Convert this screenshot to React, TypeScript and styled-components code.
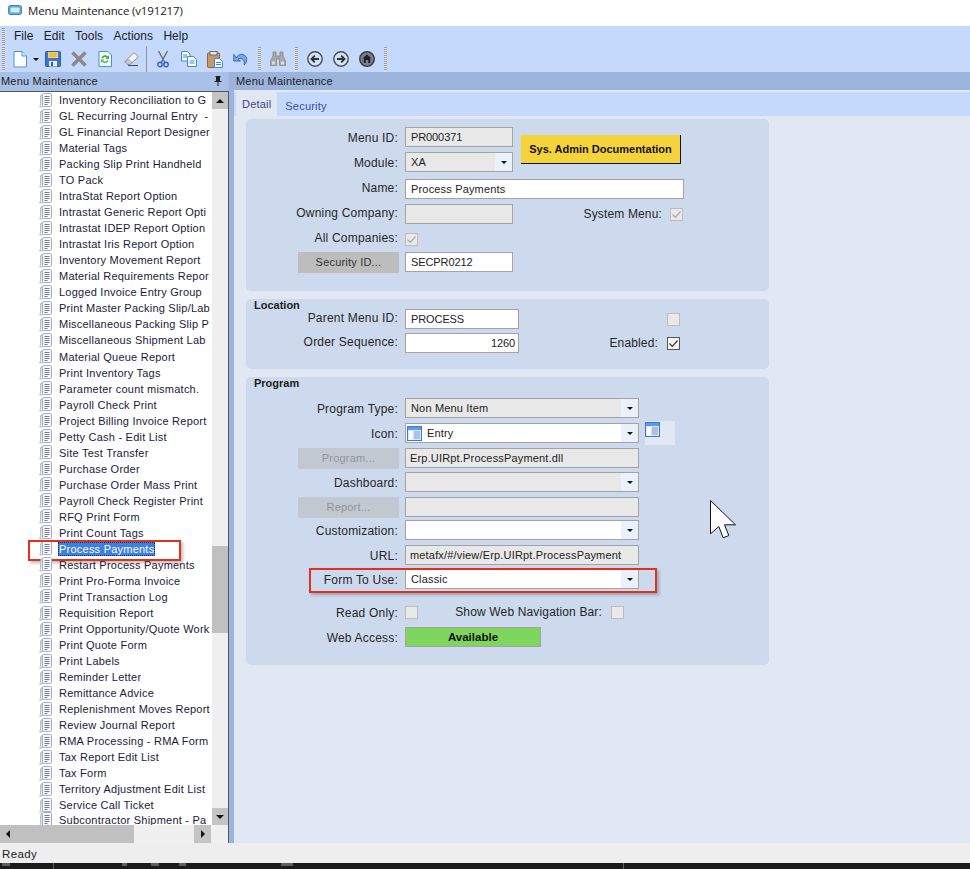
import React from 'react';
import styled, { createGlobalStyle } from 'styled-components';

const GlobalStyle = createGlobalStyle`
    html, body {
        margin: 0;
        padding: 0;
        background: #fff;
    }
    body {
        font-family: "Liberation Sans", Arial, sans-serif;
        font-size: 11px;
        color: #1e1e1e;
    }
    * {
        box-sizing: border-box;
    }
`;

const menuItems: string[] = [
    'Inventory Reconciliation to G',
    'GL Recurring Journal Entry  -',
    'GL Financial Report Designer',
    'Material Tags',
    'Packing Slip Print Handheld',
    'TO Pack',
    'IntraStat Report Option',
    'Intrastat Generic Report Opti',
    'Intrastat IDEP Report Option',
    'Intrastat Iris Report Option',
    'Inventory Movement Report',
    'Material Requirements Repor',
    'Logged Invoice Entry Group',
    'Print Master Packing Slip/Lab',
    'Miscellaneous Packing Slip P',
    'Miscellaneous Shipment Lab',
    'Material Queue Report',
    'Print Inventory Tags',
    'Parameter count mismatch.',
    'Payroll Check Print',
    'Project Billing Invoice Report',
    'Petty Cash - Edit List',
    'Site Test Transfer',
    'Purchase Order',
    'Purchase Order Mass Print',
    'Payroll Check Register Print',
    'RFQ Print Form',
    'Print Count Tags',
    'Process Payments',
    'Restart Process Payments',
    'Print Pro-Forma Invoice',
    'Print Transaction Log',
    'Requisition Report',
    'Print Opportunity/Quote Work',
    'Print Quote Form',
    'Print Labels',
    'Reminder Letter',
    'Remittance Advice',
    'Replenishment Moves Report',
    'Review Journal Report',
    'RMA Processing - RMA Form',
    'Tax Report Edit List',
    'Tax Form',
    'Territory Adjustment Edit List',
    'Service Call Ticket',
    'Subcontractor Shipment - Pa',
];

/* ---------- icons ---------- */

const AppIcon = () => (
    <svg width="14" height="10" viewBox="0 0 14 10">
        <rect x="0.5" y="0.5" width="13" height="9" rx="2" fill="#5fa8d8" stroke="#3f88c0" />
        <rect x="2.5" y="2.5" width="9" height="5" rx="1" fill="#d4ecfa" />
    </svg>
);

const NewDocIcon = () => (
    <svg width="14" height="17" viewBox="0 0 14 17">
        <path d="M1 .5h8l4.5 4.5v11H1z" fill="#fff" stroke="#4a90e0" />
        <path d="M9 .5v4.5h4.5" fill="#d8e8fb" stroke="#4a90e0" />
    </svg>
);

const SaveIcon = () => (
    <svg width="16" height="16" viewBox="0 0 16 16">
        <rect x="0.5" y="0.5" width="15" height="15" rx="1" fill="#3f76c8" stroke="#2f5ca8" />
        <rect x="3" y="1" width="10" height="6" fill="#f5d36a" />
        <path d="M4.5 3h7M4.5 5h7" stroke="#d9a93c" />
        <rect x="4" y="10" width="8" height="5.5" fill="#e8eefa" />
        <rect x="6" y="11" width="2" height="4" fill="#2f5ca8" />
    </svg>
);

const DeleteIcon = () => (
    <svg width="16" height="16" viewBox="0 0 16 16">
        <path d="M1.5 1.5l13 13M14.5 1.5l-13 13" stroke="#8a8a8a" strokeWidth="3.6" />
    </svg>
);

const RefreshIcon = () => (
    <svg width="14" height="16" viewBox="0 0 14 16">
        <path d="M1 .5h9l3.5 3.5v11.5H1z" fill="#f4f8ff" stroke="#4a90e0" />
        <path d="M3.5 7a3.6 3.6 0 0 1 6.4-1.4L11 4.5V8H7.6l1.2-1.2A2.2 2.2 0 0 0 5 7.6z" fill="#46a838" />
        <path d="M10.5 9.4A3.6 3.6 0 0 1 4.1 10.8L3 12V8.6h3.4L5.2 9.8A2.2 2.2 0 0 0 9 9z" fill="#6cc04a" />
    </svg>
);

const EraserIcon = () => (
    <svg width="15" height="14" viewBox="0 0 15 14">
        <path d="M1 9.5L9 1.5c.6-.6 1.4-.6 2 0l2.6 2.2c.6.6.6 1.3 0 1.9L6 12.5H3.5z" fill="#f2f2f4" stroke="#8c8c98" />
        <path d="M1 9.5l2.5 3H6l2-2-3-3z" fill="#c8c8d0" stroke="#8c8c98" strokeWidth=".6" />
        <path d="M4 13.5h10" stroke="#3c4a6a" />
    </svg>
);

const CutIcon = () => (
    <svg width="12" height="17" viewBox="0 0 12 17">
        <path d="M1.5 0l6 11M10.5 0l-6 11" stroke="#6a6d73" strokeWidth="1.4" />
        <circle cx="3" cy="13.5" r="2.2" fill="none" stroke="#2e62c8" strokeWidth="1.4" />
        <circle cx="9" cy="13.5" r="2.2" fill="none" stroke="#2e62c8" strokeWidth="1.4" />
    </svg>
);

const CopyIcon = () => (
    <svg width="16" height="16" viewBox="0 0 16 16">
        <path d="M.5.5h6l2.5 2.5v7H.5z" fill="#fff" stroke="#3f86e0" />
        <path d="M6.5 5.5h6l3 3v7h-9z" fill="#fff" stroke="#3f86e0" />
        <path d="M2 4h4M2 6h4M8.5 10h5M8.5 12h5" stroke="#3f86e0" />
    </svg>
);

const PasteIcon = () => (
    <svg width="16" height="17" viewBox="0 0 16 17">
        <rect x="0.5" y="2" width="12" height="14.5" rx="1" fill="#c49a6c" stroke="#8a6440" />
        <rect x="3" y="0.5" width="7" height="3.5" fill="#e8e8e8" stroke="#6c6c6c" />
        <path d="M7.5 7.5h5l3 3v6h-8z" fill="#fff" stroke="#3f86e0" />
        <path d="M9 11.5h5M9 13.5h5" stroke="#3f86e0" />
    </svg>
);

const UndoIcon = () => (
    <svg width="15" height="14" viewBox="0 0 15 14">
        <path d="M3.5 6A5 4.4 0 0 1 13.6 8c0 2-1 3.5-2.6 5 .6-2.6.2-6-3-6.6-1.4-.2-2.4.2-3 .9L7.5 9H.8V2.4L3 5z" fill="#7fa8e8" stroke="#2e58c0" strokeWidth=".9" />
    </svg>
);

const BinocularsIcon = () => (
    <svg width="16" height="16" viewBox="0 0 16 16">
        <path d="M3 1h3v4h4V1h3v4l2.5 5v4.5H9.5V8h-3v6.5H.5V10L3 5z" fill="#a9a9a9" stroke="#868686" strokeWidth=".8" />
        <path d="M2 10.5h3v3H2zM11 10.5h3v3h-3z" fill="#dedede" />
    </svg>
);

const ArrowCircleIcon = ({ dir }: { dir: 'left' | 'right' }) => (
    <svg width="16" height="16" viewBox="0 0 16 16">
        <circle cx="8" cy="8" r="7.2" fill="#d6e1f5" stroke="#4a4d54" strokeWidth="1.4" />
        {dir === 'left'
            ? <path d="M12 8H5M7.8 4.7L4.5 8l3.3 3.3" fill="none" stroke="#2c2f36" strokeWidth="1.8" />
            : <path d="M4 8h7M8.2 4.7L11.5 8l-3.3 3.3" fill="none" stroke="#2c2f36" strokeWidth="1.8" />}
    </svg>
);

const HomeCircleIcon = () => (
    <svg width="16" height="16" viewBox="0 0 16 16">
        <circle cx="8" cy="8" r="7.2" fill="#7c818b" stroke="#3e4148" strokeWidth="1.6" />
        <path d="M8 3.2l4.5 4.3h-1.3V12H9.2V9H6.800v3H4.800V7.500H3.500z" fill="#1f2126" />
    </svg>
);

const PinIcon = () => (
    <svg width="8" height="10" viewBox="0 0 8 10">
        <path d="M1.5.5h5M2.5.5v5M5.5.5v5M.5 5.500h7M4 5.500V10" fill="none" stroke="#1e1e1e" />
        <rect x="3" y="1" width="2.5" height="4" fill="#1e1e1e" />
    </svg>
);

const TreeDocIcon = () => (
    <svg width="14" height="15" viewBox="0 0 14 15">
        <path d="M3 1.5C1.5 2 1.5 3 1.5 5v6c0 1.5-.5 2.500-1 3h3z" fill="#e8edf4" stroke="#a8b2c0" strokeWidth=".8" />
        <rect x="3.5" y="0.5" width="9" height="13" rx="1" fill="#f4f6fa" stroke="#a4aebc" />
        <path d="M5.5 3.5h5M5.5 5.5h5M5.5 7.5h5M5.5 9.5h5M5.5 11.5h3" stroke="#75818f" />
    </svg>
);

const EntryIcon = () => (
    <svg width="15" height="15" viewBox="0 0 15 15">
        <rect x="0.5" y="0.5" width="14" height="14" fill="#dbe7f8" stroke="#3f78d0" />
        <rect x="1" y="1" width="13" height="3" fill="#5f9ae8" />
        <rect x="2" y="5" width="3.5" height="8.5" fill="#fff" />
        <path d="M7 6h6M7 8h6M7 10h6M7 12h6" stroke="#7f9cc8" />
    </svg>
);

const CheckMark = ({ color }: { color: string }) => (
    <svg width="11" height="11" viewBox="0 0 11 11">
        <path d="M1.5 5.5l2.8 2.8L9.5 2.5" fill="none" stroke={color} strokeWidth="1.2" />
    </svg>
);

/* ---------- window chrome ---------- */

const Window = styled.div`
    position: relative;
    display: flex;
    flex-direction: column;
    width: 970px;
    height: 869px;
    overflow: hidden;
`;

const TitleBar = styled.div`
    display: flex;
    align-items: center;
    gap: 6px;
    height: 26px;
    padding: 0 0 6px 8px;
    font-family: "Open Sans", sans-serif;
    font-size: 11.5px;
    letter-spacing: -.15px;
    color: #222;
    background: #fff;
`;

const MenuBar = styled.div`
    display: flex;
    align-items: center;
    height: 20px;
    padding-left: 2px;
    background: #c5d9fd;
    font-size: 12px;
    color: #1c1c1c;

    span {
        margin-right: 10.5px;
    }
`;

const Grip = styled.i<{ $gap?: number }>`
    display: block;
    flex: none;
    width: 3px;
    height: 24px;
    margin: 0 ${p => p.$gap ?? 0}px;
    background: repeating-linear-gradient(to bottom, #9a9a9a 0 1px, #e4e4e4 1px 2px);
`;

const MenuGrip = styled(Grip)`
    height: 17px;
    margin-right: 9px;
`;

const ToolBar = styled.div`
    display: flex;
    align-items: center;
    height: 26px;
    padding-left: 2px;
    background: #c5d9fd;
`;

const ToolButton = styled.span`
    display: flex;
    flex: none;
    align-items: center;
    justify-content: center;
    width: 26px;
    height: 26px;
`;

const FirstToolButton = styled(ToolButton)`
    margin-left: 1.5px;
`;

const Caret = styled.i`
    flex: none;
    width: 0;
    height: 0;
    border-left: 3px solid transparent;
    border-right: 3px solid transparent;
    border-top: 3px solid #111;
`;

const ToolCaret = styled(Caret)`
    margin-right: 1.5px;
`;

const ToolSeparator = styled.i`
    flex: none;
    width: 1px;
    height: 26px;
    margin: 0 2.5px 0 2px;
    background: #8d949e;
`;

const Main = styled.div`
    display: flex;
    flex: 1;
    min-height: 0;
`;

const StatusBar = styled.div`
    flex: none;
    height: 20px;
    padding: 5px 2px;
    background: #eeeeee;
    font-size: 11.5px;
    color: #222;
    letter-spacing: .4px;
`;

const TaskStrip = styled.div`
    display: flex;
    flex: none;
    height: 6px;
    background: #1b1b1b;
    overflow: hidden;
`;

const TaskMark = styled.i<{ $left: number; $width: number; $short?: boolean }>`
    display: block;
    flex: none;
    width: ${p => p.$width}px;
    height: ${p => (p.$short ? 3 : 6)}px;
    margin-left: ${p => p.$left}px;
    background: #5e5e5e;
`;

/* ---------- left tree ---------- */

const Side = styled.div`
    display: flex;
    flex: none;
    flex-direction: column;
    width: 229px;
`;

const SideHeader = styled.div`
    display: flex;
    flex: none;
    align-items: center;
    justify-content: space-between;
    height: 19px;
    padding: 0 7px 2px 1px;
    background: #a9c0e8;
    color: #1c1c1c;
    letter-spacing: .2px;
`;

const TreeFrame = styled.div`
    display: flex;
    flex: 1;
    flex-direction: column;
    min-height: 0;
    border-top: 1px solid #55575c;
    border-right: 1px solid #55575c;
    background: #fff;
`;

const TreeBody = styled.div`
    display: flex;
    flex: 1;
    min-height: 0;
`;

const TreeList = styled.ul`
    flex: 1;
    min-width: 0;
    margin: 0;
    padding: 0;
    list-style: none;
    overflow: hidden;
`;

const TreeRow = styled.li`
    position: relative;
    display: flex;
    align-items: center;
    height: 16.04px;
    padding-left: 39px;
    white-space: pre;
    color: #1a1a3a;
    letter-spacing: .23px;

    svg {
        flex: none;
        margin-right: 5px;
    }

    &:last-child {
        margin-top: -1.5px;
    }
`;

const RowLabel = styled.span<{ $selected?: boolean }>`
    padding: 0 1px;
    line-height: 14px;
    ${p => p.$selected && `
        color: #fff;
        background: #3d80df;
        outline: 1px dotted #10305c;
        outline-offset: -1px;
    `}
`;

const RedMark = styled.i`
    position: absolute;
    border: 2px solid #e1301f;
    box-shadow: 2px 2px 3px rgba(60, 60, 60, .35);
    pointer-events: none;
`;

const RowMark = styled(RedMark)`
    left: 28px;
    top: -1px;
    width: 153px;
    height: 21px;
`;

const VScroll = styled.div`
    display: flex;
    flex: none;
    flex-direction: column;
    width: 16px;
    background: #f0f0f0;
`;

const HScroll = styled.div`
    display: flex;
    flex: none;
    height: 18px;
    background: #f0f0f0;
`;

const ScrollButton = styled.div`
    display: flex;
    flex: none;
    align-items: center;
    justify-content: center;
    width: 16px;
    height: 17px;
    background: #c4c4c4;
`;

const VTrackGap = styled.div<{ $size?: number }>`
    flex: ${p => (p.$size ? 'none' : 1)};
    height: ${p => p.$size ?? 0}px;
`;

const VThumb = styled.div`
    flex: none;
    height: 87px;
    background: #c0c0c0;
`;

const HThumb = styled.div`
    display: flex;
    flex: none;
    align-items: center;
    width: 134px;
    padding-left: 6px;
    background: #c0c0c0;
`;

const HGap = styled.div`
    flex: none;
    width: 60px;
`;

const HButton = styled(ScrollButton)`
    width: 17px;
    height: 18px;
`;

const Triangle = styled.i<{ $dir: 'up' | 'down' | 'left' | 'right' }>`
    width: 0;
    height: 0;
    ${p => p.$dir === 'up' && 'border-left: 4px solid transparent; border-right: 4px solid transparent; border-bottom: 4px solid #111;'}
    ${p => p.$dir === 'down' && 'border-left: 4px solid transparent; border-right: 4px solid transparent; border-top: 4px solid #111;'}
    ${p => p.$dir === 'left' && 'border-top: 4px solid transparent; border-bottom: 4px solid transparent; border-right: 4px solid #111;'}
    ${p => p.$dir === 'right' && 'border-top: 4px solid transparent; border-bottom: 4px solid transparent; border-left: 4px solid #111;'}
`;

/* ---------- right pane ---------- */

const Pane = styled.div`
    display: flex;
    flex: 1;
    flex-direction: column;
    min-width: 0;
`;

const PaneHeader = styled.div`
    display: flex;
    flex: none;
    align-items: center;
    height: 18px;
    padding-left: 7px;
    background: #9cb3dc;
    color: #1c1c1c;
    letter-spacing: .2px;
`;

const PaneBody = styled.div`
    flex: 1;
    min-height: 0;
    margin-left: 5px;
    padding-top: 2px;
    background: #e1e8f4;
    box-shadow: -5px 0 0 #9cb3dc;
`;

const TabStrip = styled.div`
    display: flex;
    align-items: flex-end;
    height: 24px;
    padding-left: 2px;
    background: #c5d9fd;
`;

const Tab = styled.div<{ $active?: boolean }>`
    height: ${p => (p.$active ? 24 : 20)}px;
    padding: ${p => (p.$active ? '6px 6px 0' : '4px 8px 0')};
    border-radius: 3px 3px 0 0;
    background: ${p => (p.$active ? '#e1e8f4' : 'transparent')};
    color: ${p => (p.$active ? '#38488c' : '#3a50a0')};
    letter-spacing: .2px;
`;

const TabContent = styled.div`
    display: flex;
    flex-direction: column;
    gap: 8px;
    margin-top: 3px;
    padding-left: 12px;
`;

const Panel = styled.section<{ $height: number; $top: number }>`
    position: relative;
    width: 523px;
    height: ${p => p.$height}px;
    padding-top: ${p => p.$top}px;
    border-radius: 5px;
    background: #cddaee;
`;

const PanelTitle = styled.div`
    height: 10px;
    margin: -4px 0 0 8px;
    font-weight: bold;
    line-height: 10px;
    color: #1c1c1c;
`;

const Stack = styled.div<{ $gap?: number; $mt?: number }>`
    display: flex;
    flex-direction: column;
    gap: ${p => p.$gap ?? 5}px;
    margin-top: ${p => p.$mt ?? 0}px;
`;

const Row = styled.div<{ $mt?: number }>`
    position: relative;
    display: flex;
    align-items: center;
    height: 20px;
    margin-top: ${p => p.$mt ?? 0}px;
`;

const TopRows = styled.div`
    display: flex;
    align-items: center;
`;

const Label = styled.div`
    flex: none;
    width: 153px;
    padding: 2px 1px 0 0;
    margin-right: 6px;
    font-size: 12px;
    letter-spacing: .2px;
    text-align: right;
    white-space: nowrap;
    color: #262626;
`;

const RaisedLabel = styled(Label)`
    padding-top: 0;
    margin-top: -2px;
`;

const ActionCell = styled.div`
    display: flex;
    flex: none;
    justify-content: flex-end;
    width: 153px;
    margin-right: 6px;
`;

const SideLabel = styled.div<{ $width: number }>`
    flex: none;
    width: ${p => p.$width}px;
    font-size: 12px;
    letter-spacing: .15px;
    text-align: right;
    white-space: nowrap;
    color: #262626;
`;

const GreyButton = styled.div<{ $muted?: boolean }>`
    display: flex;
    align-items: center;
    justify-content: center;
    width: 101px;
    height: 21px;
    background: ${p => (p.$muted ? '#c2c8d2' : '#bdbdbd')};
    color: ${p => (p.$muted ? '#8e939b' : '#333')};
    letter-spacing: .2px;
`;

const Field = styled.div<{ $width: number; $disabled?: boolean; $right?: boolean; $pad?: number; $tight?: boolean }>`
    display: flex;
    flex: none;
    align-items: center;
    justify-content: ${p => (p.$right ? 'flex-end' : 'flex-start')};
    width: ${p => p.$width}px;
    height: 20px;
    padding: 0 ${p => p.$pad ?? 5}px;
    border: 1px solid #a3a3a3;
    background: ${p => (p.$disabled ? '#e8e8e8' : '#fff')};
    color: #222;
    letter-spacing: ${p => (p.$tight ? -.1 : .17)}px;
    white-space: nowrap;
    overflow: hidden;
`;

const SelectBox = styled(Field)`
    padding: 0 0 0 5px;

    svg {
        margin: 0 5px 0 -4px;
    }
`;

const SelectText = styled.span`
    flex: 1;
`;

const SelectArrow = styled.span`
    display: flex;
    flex: none;
    align-items: center;
    justify-content: center;
    width: 17px;
    height: 100%;
    background: #eaf1fb;
`;

const Check = styled.span<{ $state: 'on' | 'off' | 'lockedOn'; $ml?: number }>`
    display: flex;
    flex: none;
    align-items: center;
    justify-content: center;
    width: 13px;
    height: 13px;
    margin-left: ${p => p.$ml ?? 0}px;
    border: 1px solid ${p => (p.$state === 'on' ? '#555' : '#bcbcbc')};
    background: ${p => (p.$state === 'on' ? '#f6f6f6' : '#e9e9e9')};
`;

const DocButton = styled.button`
    flex: none;
    width: 160px;
    height: 29px;
    margin-left: 8px;
    padding: 0;
    border: 0;
    border-right: 1px solid #111;
    border-bottom: 1px solid #111;
    background: #f5d33a;
    font: bold 11px "Liberation Sans", Arial, sans-serif;
    color: #111;
`;

const IconSwatch = styled.span`
    display: flex;
    flex: none;
    align-items: flex-start;
    width: 30px;
    height: 24px;
    margin-left: 6px;
    padding-top: 1px;
    background: #e1e8f4;
`;

const FormMark = styled(RedMark)`
    left: 63px;
    top: -1px;
    width: 348px;
    height: 25px;
`;

const Available = styled.div`
    display: flex;
    align-items: center;
    justify-content: center;
    flex: none;
    width: 136px;
    height: 20px;
    border: 1px solid #a3a3a3;
    background: #7fd65f;
    font-weight: bold;
    font-size: 11.5px;
    color: #111;
`;

const Cursor = styled.svg`
    position: absolute;
    left: 710px;
    top: 500px;
`;

const Select = ({ width, disabled, text, icon }: { width: number; disabled?: boolean; text?: string; icon?: React.ReactNode }) => (
    <SelectBox $width={width} $disabled={disabled}>
        {icon}
        <SelectText>{text}</SelectText>
        <SelectArrow><Caret /></SelectArrow>
    </SelectBox>
);

const App = () => {
    return (
        <Window>
            <GlobalStyle />
            <TitleBar>
                <AppIcon />
                <span>Menu Maintenance (v191217)</span>
            </TitleBar>
            <MenuBar>
                <MenuGrip />
                <span>File</span>
                <span>Edit</span>
                <span>Tools</span>
                <span>Actions</span>
                <span>Help</span>
            </MenuBar>
            <ToolBar>
                <Grip />
                <FirstToolButton><NewDocIcon /></FirstToolButton>
                <ToolCaret />
                <ToolButton><SaveIcon /></ToolButton>
                <ToolButton><DeleteIcon /></ToolButton>
                <ToolButton><RefreshIcon /></ToolButton>
                <ToolButton><EraserIcon /></ToolButton>
                <ToolSeparator />
                <ToolButton><CutIcon /></ToolButton>
                <ToolButton><CopyIcon /></ToolButton>
                <ToolButton><PasteIcon /></ToolButton>
                <ToolButton><UndoIcon /></ToolButton>
                <Grip $gap={4} />
                <ToolButton><BinocularsIcon /></ToolButton>
                <Grip $gap={4} />
                <ToolButton><ArrowCircleIcon dir="left" /></ToolButton>
                <ToolButton><ArrowCircleIcon dir="right" /></ToolButton>
                <ToolButton><HomeCircleIcon /></ToolButton>
                <Grip $gap={4} />
            </ToolBar>
            <Main>
                <Side>
                    <SideHeader>
                        <span>Menu Maintenance</span>
                        <PinIcon />
                    </SideHeader>
                    <TreeFrame>
                        <TreeBody>
                            <TreeList>
                                {menuItems.map(item => (
                                    <TreeRow key={item}>
                                        <TreeDocIcon />
                                        <RowLabel $selected={item === 'Process Payments'}>{item}</RowLabel>
                                        {item === 'Process Payments' && <RowMark />}
                                    </TreeRow>
                                ))}
                            </TreeList>
                            <VScroll>
                                <ScrollButton><Triangle $dir="up" /></ScrollButton>
                                <VTrackGap $size={437} />
                                <VThumb />
                                <VTrackGap />
                                <ScrollButton><Triangle $dir="down" /></ScrollButton>
                            </VScroll>
                        </TreeBody>
                        <HScroll>
                            <HThumb><Triangle $dir="left" /></HThumb>
                            <HGap />
                            <HButton><Triangle $dir="right" /></HButton>
                        </HScroll>
                    </TreeFrame>
                </Side>
                <Pane>
                    <PaneHeader>Menu Maintenance</PaneHeader>
                    <PaneBody>
                        <TabStrip>
                            <Tab $active>Detail</Tab>
                            <Tab>Security</Tab>
                        </TabStrip>
                        <TabContent>
                            <Panel $height={172} $top={8}>
                                <Stack>
                                    <TopRows>
                                        <Stack>
                                            <Row>
                                                <Label>Menu ID:</Label>
                                                <Field $width={108} $disabled $tight>PR000371</Field>
                                            </Row>
                                            <Row>
                                                <Label>Module:</Label>
                                                <Select width={108} disabled text="XA" />
                                            </Row>
                                        </Stack>
                                        <DocButton>Sys. Admin Documentation</DocButton>
                                    </TopRows>
                                    <Row $mt={2}>
                                        <RaisedLabel>Name:</RaisedLabel>
                                        <Field $width={279}>Process Payments</Field>
                                    </Row>
                                    <Row>
                                        <RaisedLabel>Owning Company:</RaisedLabel>
                                        <Field $width={108} $disabled />
                                        <SideLabel $width={149}>System Menu:</SideLabel>
                                        <Check $state="lockedOn" $ml={8}><CheckMark color="#a8a8a8" /></Check>
                                    </Row>
                                    <Row>
                                        <RaisedLabel>All Companies:</RaisedLabel>
                                        <Check $state="lockedOn"><CheckMark color="#a8a8a8" /></Check>
                                    </Row>
                                    <Row $mt={-2}>
                                        <ActionCell><GreyButton>Security ID...</GreyButton></ActionCell>
                                        <Field $width={108} $tight>SECPR0212</Field>
                                    </Row>
                                </Stack>
                            </Panel>
                            <Panel $height={70} $top={5}>
                                <PanelTitle>Location</PanelTitle>
                                <Stack $gap={4} $mt={-1}>
                                    <Row>
                                        <RaisedLabel>Parent Menu ID:</RaisedLabel>
                                        <Field $width={114} $tight>PROCESS</Field>
                                        <Check $state="off" $ml={148} />
                                    </Row>
                                    <Row>
                                        <RaisedLabel>Order Sequence:</RaisedLabel>
                                        <Field $width={114} $right $pad={3} $tight>1260</Field>
                                        <SideLabel $width={139}>Enabled:</SideLabel>
                                        <Check $state="on" $ml={9}><CheckMark color="#333" /></Check>
                                    </Row>
                                </Stack>
                            </Panel>
                            <Panel $height={288} $top={5}>
                                <PanelTitle>Program</PanelTitle>
                                <Stack $mt={10}>
                                    <Row>
                                        <Label>Program Type:</Label>
                                        <Select width={234} disabled text="Non Menu Item" />
                                    </Row>
                                    <Row>
                                        <Label>Icon:</Label>
                                        <Select width={234} text="Entry" icon={<EntryIcon />} />
                                        <IconSwatch><EntryIcon /></IconSwatch>
                                    </Row>
                                    <Row>
                                        <ActionCell><GreyButton $muted>Program...</GreyButton></ActionCell>
                                        <Field $width={234} $disabled $pad={4}>Erp.UIRpt.ProcessPayment.dll</Field>
                                    </Row>
                                    <Row $mt={-1}>
                                        <Label>Dashboard:</Label>
                                        <Select width={234} disabled />
                                    </Row>
                                    <Row>
                                        <ActionCell><GreyButton $muted>Report...</GreyButton></ActionCell>
                                        <Field $width={234} $disabled />
                                    </Row>
                                    <Row $mt={-2}>
                                        <Label>Customization:</Label>
                                        <Select width={234} />
                                    </Row>
                                    <Row>
                                        <Label>URL:</Label>
                                        <Field $width={234} $disabled $pad={4}>metafx/#/view/Erp.UIRpt.ProcessPayment</Field>
                                    </Row>
                                    <Row $mt={-1}>
                                        <Label>Form To Use:</Label>
                                        <Select width={234} text="Classic" />
                                        <FormMark />
                                    </Row>
                                    <Row $mt={8}>
                                        <Label>Read Only:</Label>
                                        <Check $state="off" />
                                        <SideLabel $width={184}>Show Web Navigation Bar:</SideLabel>
                                        <Check $state="off" $ml={9} />
                                    </Row>
                                    <Row>
                                        <Label>Web Access:</Label>
                                        <Available>Available</Available>
                                    </Row>
                                </Stack>
                            </Panel>
                        </TabContent>
                    </PaneBody>
                </Pane>
            </Main>
            <StatusBar>Ready</StatusBar>
            <TaskStrip>
                <TaskMark $left={2} $width={8} $short />
                <TaskMark $left={43} $width={1} />
                <TaskMark $left={68} $width={5} $short />
                <TaskMark $left={24} $width={8} $short />
                <TaskMark $left={20} $width={7} $short />
                <TaskMark $left={95} $width={12} $short />
                <TaskMark $left={330} $width={1} />
            </TaskStrip>
            <Cursor width="27" height="39" viewBox="0 0 27 39">
                <path d="M.5.5L25.5 24.8H14.5L18.8 35.5 13.2 37.8 8.8 26.5.5 33.8z" fill="#fff" stroke="#111" />
            </Cursor>
        </Window>
    );
};

export default App;
